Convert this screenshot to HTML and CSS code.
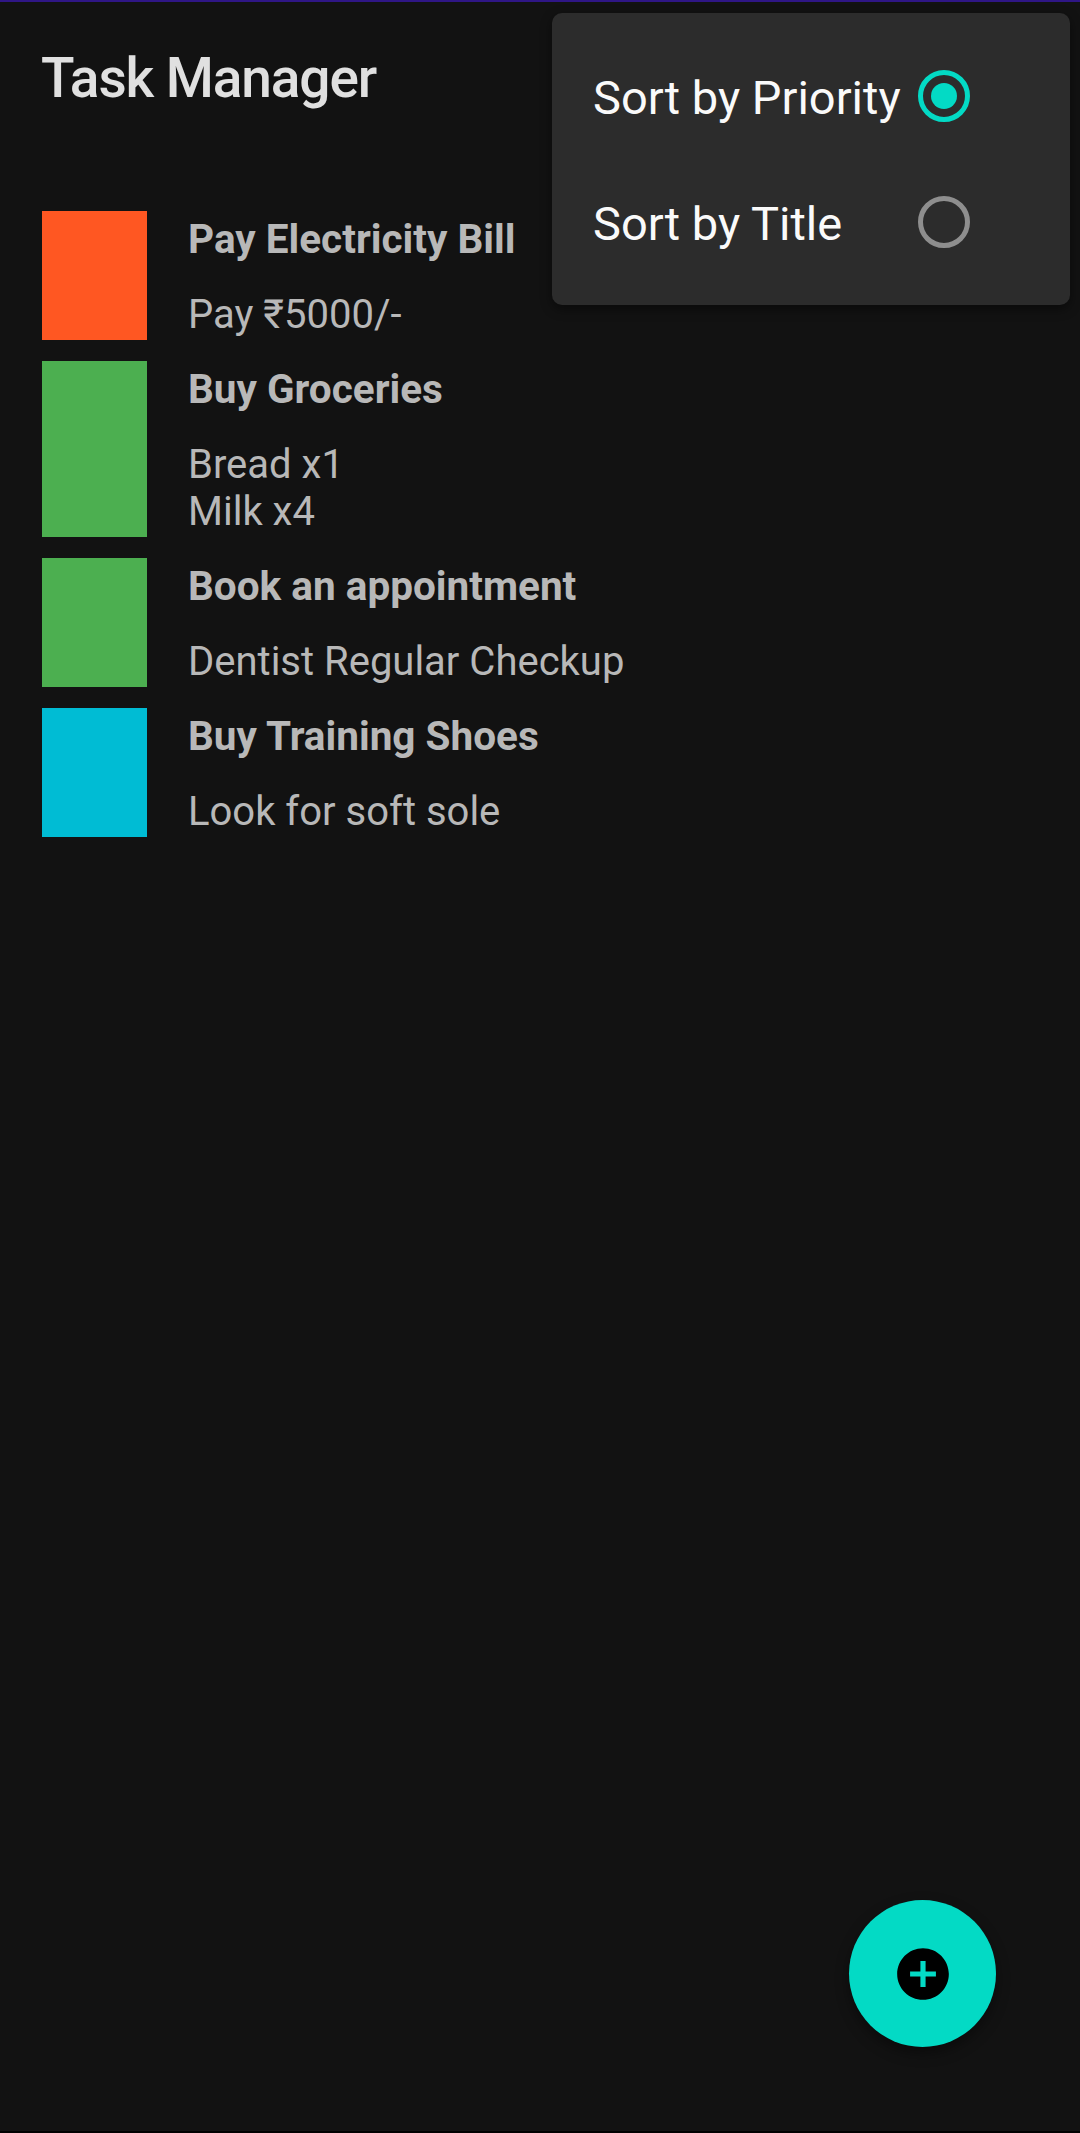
FILE: index.html
```html
<!DOCTYPE html>
<html lang="en">
<head>
<meta charset="utf-8">
<title>Task Manager</title>
<link rel="stylesheet" href="styles.css">
</head>
<body>
<div class="app">
  <div class="status-line"></div>
  <header class="toolbar">
    <h1 class="toolbar-title">Task Manager</h1>
  </header>
  <main class="task-list">
    <div class="task">
      <div class="priority priority-high"></div>
      <div class="task-text">
        <div class="task-title">Pay Electricity Bill</div>
        <div class="task-desc">Pay ₹5000/-</div>
      </div>
    </div>
    <div class="task">
      <div class="priority priority-medium"></div>
      <div class="task-text">
        <div class="task-title">Buy Groceries</div>
        <div class="task-desc">Bread x1<br>Milk x4</div>
      </div>
    </div>
    <div class="task">
      <div class="priority priority-medium"></div>
      <div class="task-text">
        <div class="task-title">Book an appointment</div>
        <div class="task-desc">Dentist Regular Checkup</div>
      </div>
    </div>
    <div class="task">
      <div class="priority priority-low"></div>
      <div class="task-text">
        <div class="task-title">Buy Training Shoes</div>
        <div class="task-desc">Look for soft sole</div>
      </div>
    </div>
  </main>
  <div class="nav-edge"></div>

  <div class="sort-menu">
    <div class="sort-item">
      <span class="sort-label">Sort by Priority</span>
      <span class="radio radio-checked"></span>
    </div>
    <div class="sort-item">
      <span class="sort-label">Sort by Title</span>
      <span class="radio"></span>
    </div>
  </div>

  <button class="fab" aria-label="Add task">
    <svg class="fab-icon" viewBox="0 0 24 24" width="62" height="62">
      <path fill="#000" d="M12 2C6.48 2 2 6.48 2 12s4.48 10 10 10 10-4.48 10-10S17.52 2 12 2zm5 11h-4v4h-2v-4H7v-2h4V7h2v4h4v2z"/>
    </svg>
  </button>
</div>
</body>
</html>
```
FILE: styles.css
```css
* {
  box-sizing: border-box;
}

html, body {
  margin: 0;
  padding: 0;
  background: #121212;
}

.app {
  position: relative;
  width: 1080px;
  height: 2133px;
  overflow: hidden;
  background: #121212;
  display: flex;
  flex-direction: column;
  font-family: Roboto, "Noto Sans", "Liberation Sans", sans-serif;
}

.status-line {
  height: 2px;
  background: #2f1686;
  flex-shrink: 0;
}

.toolbar {
  height: 151px;
  flex-shrink: 0;
  display: flex;
  align-items: center;
  padding-left: 41px;
}

.toolbar-title {
  margin: 0;
  font-size: 55px;
  font-weight: 500;
  letter-spacing: -1.1px;
  color: #e0e0e0;
  line-height: normal;
}

.task-list {
  flex: 1;
  display: flex;
  flex-direction: column;
  gap: 21px;
  padding-top: 58px;
  padding-left: 42px;
}

.task {
  display: flex;
  align-items: stretch;
}

.priority {
  width: 105px;
  flex-shrink: 0;
}

.priority-high {
  background: #ff5722;
}

.priority-medium {
  background: #4caf50;
}

.priority-low {
  background: #00bcd4;
}

.task-text {
  margin-left: 41px;
  padding-top: 5px;
  padding-bottom: 2px;
  font-size: 40px;
  line-height: 47px;
  color: #b8b8b8;
}

.task-title {
  font-weight: 700;
  font-size: 40.5px;
}

.task-desc {
  margin-top: 28px;
  font-weight: 400;
  font-size: 40px;
}

.nav-edge {
  height: 2px;
  background: #000;
  flex-shrink: 0;
}

.sort-menu {
  position: absolute;
  left: 552px;
  top: 13px;
  width: 518px;
  padding: 20px 0;
  background: #2c2c2c;
  border-radius: 10px;
  box-shadow: 0 4px 12px rgba(0, 0, 0, 0.45);
}

.sort-item {
  height: 126px;
  display: grid;
  grid-template-columns: 1fr 52px;
  align-items: center;
  padding-left: 41px;
  padding-right: 100px;
}

.sort-label {
  font-size: 47px;
  color: #fafafa;
  white-space: nowrap;
  padding-top: 3px;
}

.radio {
  width: 52px;
  height: 52px;
  border-radius: 50%;
  border: 5px solid #8e8e8e;
  display: flex;
  align-items: center;
  justify-content: center;
}

.radio-checked {
  border-color: #03dac5;
}

.radio-checked::after {
  content: "";
  width: 26px;
  height: 26px;
  border-radius: 50%;
  background: #03dac5;
}

.fab {
  position: absolute;
  right: 84px;
  bottom: 86px;
  width: 147px;
  height: 147px;
  border: none;
  border-radius: 50%;
  background: #03dac5;
  padding: 0;
  display: flex;
  align-items: center;
  justify-content: center;
  box-shadow: 0 6px 14px rgba(0, 0, 0, 0.4);
}

.fab-icon {
  display: block;
}
```
